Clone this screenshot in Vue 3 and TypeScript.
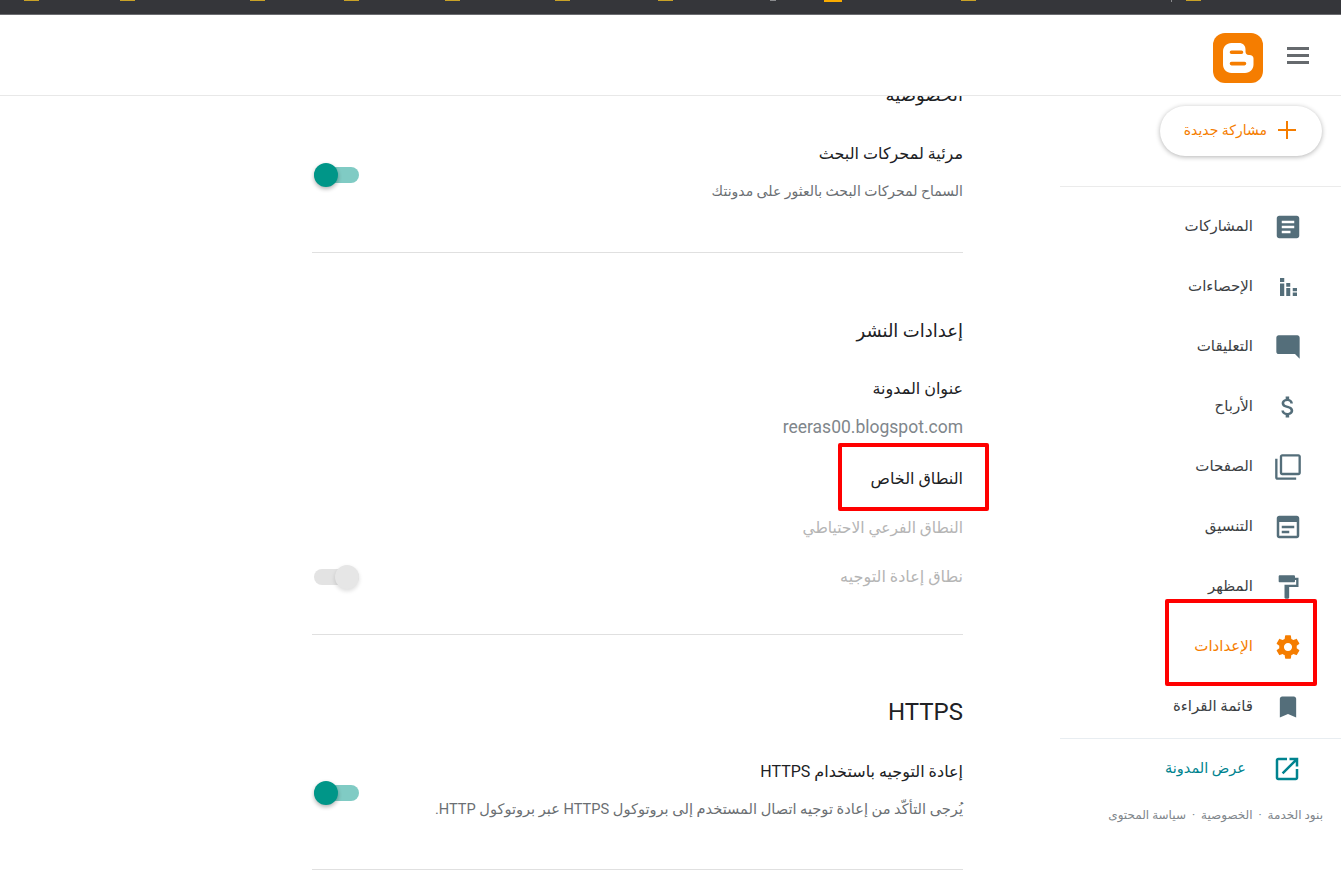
<script setup lang="ts">
const bookmarks = [
  { left: 24, width: 15, color: '#c9a227', height: 1 },
  { left: 120, width: 15, color: '#c9a227', height: 1 },
  { left: 250, width: 15, color: '#c9a227', height: 1 },
  { left: 344, width: 15, color: '#c9a227', height: 1 },
  { left: 445, width: 15, color: '#c9a227', height: 1 },
  { left: 555, width: 15, color: '#c9a227', height: 1 },
  { left: 658, width: 15, color: '#c9a227', height: 1 },
  { left: 770, width: 6, color: '#8a8b8e', height: 1 },
  { left: 824, width: 18, color: '#f9ab00', height: 2 },
  { left: 961, width: 15, color: '#c9a227', height: 1 },
  { left: 1171, width: 1, color: '#8a8b8e', height: 2 },
  { left: 1186, width: 15, color: '#c9a227', height: 1 },
]

const bookmarkStyles = bookmarks.map((b, i) => ({
  marginLeft: (i === 0 ? b.left : b.left - bookmarks[i - 1].left - bookmarks[i - 1].width) + 'px',
  width: b.width + 'px',
  height: b.height + 'px',
  background: b.color,
}))

const navItems = [
  { label: 'المشاركات', size: 30, path: 'M19 3H5c-1.1 0-2 .9-2 2v14c0 1.1.9 2 2 2h14c1.1 0 2-.9 2-2V5c0-1.1-.9-2-2-2zm-5 14H7v-2h7v2zm3-4H7v-2h10v2zm0-4H7V7h10v2z' },
  { label: 'الإحصاءات', size: 30, path: 'M5.600 4.800h3.400V8H5.600zM5.600 9.200h3.400v10H5.600zM10.600 8.800h3.200v3h-3.200zM10.600 12.800h3.200v6.400h-3.200zM15.800 12.800h3.400v2.600h-3.400zM15.800 16.400h3.400v2.800h-3.400z' },
  { label: 'التعليقات', size: 28, path: 'M21.990 4c0-1.100-.890-2-1.990-2H4c-1.100 0-2 .9-2 2v12c0 1.100.9 2 2 2h14l4 4-.010-18z' },
  { label: 'الأرباح', size: 28, path: 'M11.800 10.900c-2.270-.590-3-1.200-3-2.150 0-1.090 1.010-1.850 2.700-1.850 1.780 0 2.440.850 2.500 2.100h2.210c-.070-1.720-1.120-3.300-3.210-3.810V3h-3v2.160c-1.940.420-3.500 1.680-3.500 3.610 0 2.310 1.910 3.460 4.700 4.130 2.500.6 3 1.480 3 2.410 0 .690-.490 1.790-2.700 1.790-2.060 0-2.870-.920-2.980-2.100h-2.200c.120 2.190 1.760 3.420 3.680 3.830V21h3v-2.150c1.950-.370 3.500-1.500 3.500-3.550 0-2.840-2.430-3.810-4.700-4.400z' },
  { label: 'الصفحات', size: 28, path: 'M3 5H1v16c0 1.100.9 2 2 2h16v-2H3V5zm18-4H7c-1.100 0-2 .9-2 2v14c0 1.100.9 2 2 2h14c1.100 0 2-.9 2-2V3c0-1.100-.9-2-2-2zm0 16H7V3h14v14z' },
  { label: 'التنسيق', size: 30, path: 'M19 3H5c-1.100 0-2 .9-2 2v14c0 1.100.9 2 2 2h14c1.100 0 2-.9 2-2V5c0-1.100-.9-2-2-2zm0 16H5V8h14v11zM7 11h10v2H7zM7 15h6v2H7z' },
  { label: 'المظهر', size: 28, path: 'M18 4V3c0-.550-.450-1-1-1H5c-.550 0-1 .450-1 1v4c0 .550.450 1 1 1h12c.550 0 1-.450 1-1V6h1v4H9v11c0 .550.450 1 1 1h2c.550 0 1-.450 1-1v-9h8V4h-3z' },
  { label: 'الإعدادات', size: 28, active: true, path: 'M19.430 12.980c.040-.320.070-.640.070-.980s-.030-.660-.070-.980l2.110-1.650c.190-.150.240-.420.120-.640l-2-3.460c-.120-.220-.390-.3-.610-.220l-2.490 1c-.520-.4-1.080-.730-1.690-.980l-.380-2.650C14.460 2.180 14.250 2 14 2h-4c-.250 0-.460.180-.490.420l-.380 2.650c-.610.250-1.170.590-1.690.980l-2.490-1c-.230-.090-.490 0-.610.220l-2 3.460c-.130.220-.070.490.120.640l2.110 1.650c-.040.320-.070.650-.070.980s.030.660.070.980l-2.110 1.650c-.190.150-.240.420-.120.640l2 3.460c.120.220.390.3.610.220l2.490-1c.520.4 1.080.730 1.690.980l.380 2.650c.030.240.240.420.490.420h4c.250 0 .460-.180.490-.420l.380-2.650c.610-.250 1.170-.590 1.690-.980l2.490 1c.230.090.490 0 .610-.220l2-3.460c.120-.220.070-.490-.120-.640l-2.110-1.650zM12 15.500c-1.930 0-3.500-1.570-3.500-3.500s1.570-3.500 3.500-3.500 3.500 1.570 3.500 3.500-1.570 3.500-3.500 3.500z' },
  { label: 'قائمة القراءة', size: 28, path: 'M17 3H7c-1.100 0-1.990.9-1.990 2L5 21l7-3 7 3V5c0-1.100-.9-2-2-2z' },
]
</script>

<template>
  <div class="page">
    <div class="browser-strip">
      <i v-for="(b, i) in bookmarkStyles" :key="i" :style="b"></i>
    </div>

    <header class="topbar">
      <svg class="logo" width="50" height="50" viewBox="0 0 50 50">
        <rect width="50" height="50" rx="12" fill="#f57d00" />
        <path fill-rule="evenodd" d="M18.500 10h7.500c4 0 6.500 2.500 6.500 6.500v2c0 2 1.200 3.500 3.300 3.500h.7c2.300 0 4 1.400 4 3.500v6c0 4.700-3.500 8.500-8.500 8.500h-13.500c-5 0-8.500-3.800-8.500-8.500v-13c0-4.700 3.500-8.500 8.500-8.500zM18.500 17.500a1.800 1.800 0 0 0 0 3.600h10a1.800 1.800 0 0 0 0-3.600zM18.500 28.800a1.800 1.800 0 0 0 0 3.600h13a1.800 1.800 0 0 0 0-3.600z" fill="#fff" />
      </svg>
      <button class="menu-btn" aria-label="menu">
        <span></span><span></span><span></span>
      </button>
    </header>

    <div class="body">
      <main class="content">
        <div class="scroller">
          <h2 class="section-title clipped">الخصوصية</h2>

          <div class="row row-first">
            <div class="toggle on low"><span></span></div>
            <div class="row-text">
              <div class="row-title">مرئية لمحركات البحث</div>
              <div class="row-desc">السماح لمحركات البحث بالعثور على مدونتك</div>
            </div>
          </div>
          <hr />

          <h2 class="section-title publish">إعدادات النشر</h2>
          <div class="row-title blog-address">عنوان المدونة</div>
          <div class="address">reeras00.blogspot.com</div>
          <div class="row-title custom-domain">النطاق الخاص</div>
          <div class="row-title disabled fallback">النطاق الفرعي الاحتياطي</div>
          <div class="row redirect">
            <div class="toggle off"><span></span></div>
            <div class="row-title disabled">نطاق إعادة التوجيه</div>
          </div>
          <hr class="hr-redirect" />

          <h2 class="section-title https">HTTPS</h2>
          <div class="row row-https">
            <div class="toggle on low"><span></span></div>
            <div class="row-text">
              <div class="row-title">إعادة التوجيه باستخدام HTTPS</div>
              <div class="row-desc desc-wide">يُرجى التأكّد من إعادة توجيه اتصال المستخدم إلى بروتوكول HTTPS عبر بروتوكول HTTP.</div>
            </div>
          </div>
          <hr class="hr-last" />
        </div>
      </main>

      <aside class="sidebar">
        <div class="new-post-wrap">
          <button class="new-post">
            <svg width="24" height="24" viewBox="0 0 24 24"><path d="M21 13h-8v8h-2v-8H3v-2h8V3h2v8h8z" fill="#f57d00" /></svg>
            <span>مشاركة جديدة</span>
          </button>
        </div>

        <nav class="nav">
          <a v-for="item in navItems" :key="item.label" class="nav-item" :class="{ active: item.active }">
            <span class="nav-icon">
              <svg :width="item.size" :height="item.size" viewBox="0 0 24 24"><path :d="item.path" /></svg>
            </span>
            <span class="nav-label">{{ item.label }}</span>
          </a>
        </nav>

        <a class="view-blog">
          <svg width="30" height="30" viewBox="0 0 24 24"><path d="M19 19H5V5h7V3H5c-1.110 0-2 .9-2 2v14c0 1.100.890 2 2 2h14c1.100 0 2-.9 2-2v-7h-2v7zM14 3v2h3.590l-9.830 9.830 1.410 1.410L19 6.410V10h2V3h-7z" /></svg>
          <span>عرض المدونة</span>
        </a>

        <div class="legal">بنود الخدمة&nbsp;&nbsp;·&nbsp;&nbsp;الخصوصية&nbsp;&nbsp;·&nbsp;&nbsp;سياسة المحتوى</div>
      </aside>
    </div>

    <!-- red annotation boxes drawn over the screenshot -->
    <div class="mark mark-domain"></div>
    <div class="mark mark-settings"></div>
  </div>
</template>

<style>
html,
body {
  margin: 0;
  background: #fff;
  overflow: hidden;
}
</style>

<style scoped>
.page {
  position: relative;
  width: 1341px;
  height: 877px;
  overflow: hidden;
  display: flex;
  flex-direction: column;
  font-family: Roboto, "Liberation Sans", "DejaVu Sans", sans-serif;
  color: #202124;
  background: #fff;
}

.browser-strip {
  flex: none;
  height: 14px;
  background: #35363a;
  border-bottom: 1px solid #6b6c70;
  display: flex;
  align-items: flex-start;
}

.browser-strip i {
  display: block;
  flex: none;
}

.topbar {
  flex: none;
  height: 80px;
  background: #fff;
  border-bottom: 1px solid #e8e8e8;
  display: flex;
  align-items: center;
  justify-content: flex-end;
  padding-right: 32px;
  gap: 24px;
  position: relative;
  z-index: 2;
}

.logo {
  margin-top: 6px;
}

.menu-btn {
  width: 22px;
  padding: 0;
  border: none;
  background: none;
  display: flex;
  flex-direction: column;
  gap: 4px;
}

.menu-btn span {
  display: block;
  height: 3px;
  background: #666a6e;
}

.body {
  flex: 1;
  min-height: 0;
  display: flex;
}

.content {
  flex: 1;
  min-width: 0;
  overflow: hidden;
  padding: 0 97px 0 312px;
}

.scroller {
  direction: rtl;
}

.section-title {
  margin: 0;
  font-size: 18px;
  font-weight: 400;
  line-height: 24px;
  color: #202124;
}

.clipped {
  margin-top: -13px;
}

.row {
  display: flex;
  align-items: center;
  justify-content: space-between;
  flex-direction: row-reverse;
}

.row-first {
  margin-top: 35px;
}

.row-title {
  font-size: 16px;
  line-height: 24px;
}

.row-desc {
  margin-top: 14px;
  font-size: 14px;
  line-height: 22px;
  color: #6b6f73;
}

.desc-wide {
  font-size: 14.6px;
}

.disabled {
  color: #b5b5b5;
}

hr {
  margin: 50px 0 0;
  border: none;
  border-top: 1px solid #e0e0e0;
}

.publish {
  margin-top: 66px;
}

.blog-address {
  margin-top: 34px;
}

.address {
  margin-top: 14px;
  font-size: 17.5px;
  line-height: 24px;
  color: #80868b;
  text-align: right;
}

.custom-domain {
  margin-top: 28px;
}

.fallback {
  margin-top: 25px;
  font-size: 15.5px;
}

.redirect {
  margin-top: 25px;
}

.hr-redirect {
  margin-top: 45px;
}

.https {
  margin-top: 65px;
  font-size: 24px;
}

.row-https {
  margin-top: 36px;
}

.hr-last {
  margin-top: 49px;
}

.toggle {
  position: relative;
  flex: none;
  width: 45px;
  height: 16px;
  border-radius: 8px;
  margin-left: 2px;
}

.toggle.low {
  margin-top: 6px;
}

.toggle span {
  position: absolute;
  top: -4px;
  width: 24px;
  height: 24px;
  border-radius: 50%;
  box-shadow: 0 2px 4px rgba(0, 0, 0, 0.3);
}

.toggle.on {
  background: #80cbc4;
}

.toggle.on span {
  left: 0;
  background: #009688;
}

.toggle.off {
  background: #e3e3e3;
}

.toggle.off span {
  right: 0;
  background: #e6e6e6;
  box-shadow: 0 2px 4px rgba(0, 0, 0, 0.14);
}

.sidebar {
  flex: none;
  width: 281px;
  direction: rtl;
  display: flex;
  flex-direction: column;
}

.new-post-wrap {
  height: 91px;
  padding: 10px 19px 0 0;
  box-sizing: border-box;
  border-bottom: 1px solid #ebebeb;
}

.new-post {
  width: 162px;
  height: 50px;
  border: none;
  border-radius: 25px;
  background: #fff;
  box-shadow: 0 1px 5px rgba(0, 0, 0, 0.3);
  color: #f57d00;
  font: inherit;
  font-size: 14px;
  display: flex;
  align-items: center;
  gap: 8px;
  padding: 0 23px 2px;
}

.nav {
  padding: 10px 0 1px;
  border-bottom: 1px solid #e8edf1;
}

.nav-item {
  height: 60px;
  display: flex;
  align-items: center;
  gap: 20px;
  padding-right: 38px;
  font-size: 15px;
  color: #3c4043;
}

.nav-icon {
  flex: none;
  width: 30px;
  height: 30px;
  display: flex;
  align-items: center;
  justify-content: center;
}

.nav-icon svg {
  fill: #546e7a;
}

.nav-label {
  margin-bottom: 2px;
}

.nav-item.active {
  color: #f57d00;
}

.nav-item.active svg {
  fill: #f57d00;
}

.view-blog {
  height: 60px;
  display: flex;
  align-items: center;
  gap: 26px;
  padding-right: 39px;
  font-size: 14.5px;
  color: #00838f;
}

.view-blog span {
  margin-bottom: 2px;
}

.view-blog svg {
  fill: #00838f;
  flex: none;
}

.legal {
  margin-top: 9px;
  padding-right: 18px;
  font-size: 12px;
  color: #80868b;
}

.mark {
  position: absolute;
  box-sizing: border-box;
  border: 4px solid #ff0000;
  border-radius: 2px;
  z-index: 3;
}

.mark-domain {
  left: 838px;
  top: 443px;
  width: 151px;
  height: 68px;
}

.mark-settings {
  left: 1165px;
  top: 599px;
  width: 152px;
  height: 87px;
}
</style>
